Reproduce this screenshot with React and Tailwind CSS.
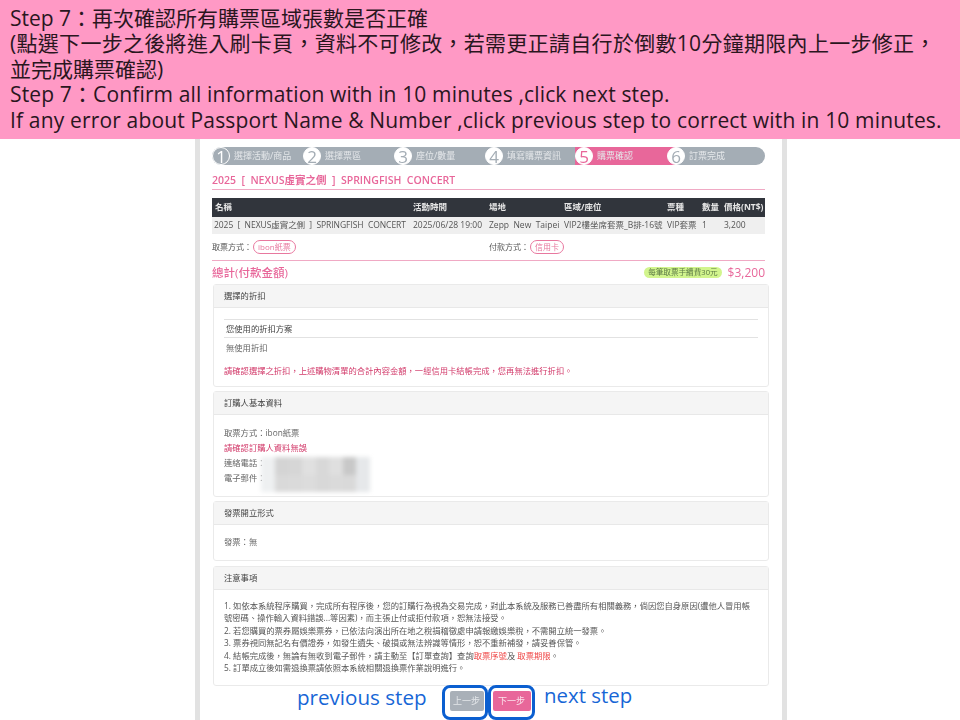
const cjk = "font-['Open_Sans','Noto_Sans_CJK_TC',sans-serif]";

const steps = [
  { no: "1", label: "選擇活動/商品", w: "w-[91px]" },
  { no: "2", label: "選擇票區", w: "w-[91px]" },
  { no: "3", label: "座位/數量", w: "w-[91px]" },
  { no: "4", label: "填寫購票資訊", w: "w-[90px]" },
  { no: "5", label: "購票確認", w: "w-[100px] -mr-[8px]", active: true },
  { no: "6", label: "訂票完成", w: "flex-1" },
];

const headCols = [
  { text: "名稱", w: "w-[198px]" },
  { text: "活動時間", w: "w-[76px]" },
  { text: "場地", w: "w-[75px]" },
  { text: "區域/座位", w: "w-[103px]" },
  { text: "票種", w: "w-[35px]" },
  { text: "數量", w: "w-[22px]" },
  { text: "價格(NT$)", w: "flex-1" },
];

const rowCols = [
  "2025  [  NEXUS虛實之側  ]  SPRINGFISH  CONCERT",
  "2025/06/28 19:00",
  "Zepp  New  Taipei",
  "VIP2樓坐席套票_B排-16號",
  "VIP套票",
  "1",
  "3,200",
];

const blurCells = [
  "bg-[#eef0f1]", "bg-[#d4d4d4]", "bg-[#d6d6d6]", "bg-[#e0e0e0]", "bg-[#d8d8d8]", "bg-[#dfdfdf]", "bg-[#c8c8c8]", "bg-[#e6e8ea]",
  "bg-[#eef0f1]", "bg-[#d9d9d9]", "bg-[#dadada]", "bg-[#dcdcdc]", "bg-[#d8d8d8]", "bg-[#dadada]", "bg-[#d9d9d9]", "bg-[#e6e8ea]",
];

function Panel({ title, className, children }) {
  return (
    <div className={`ml-px w-[556px] rounded-[3px] border border-[#eaeaea] bg-white ${className}`}>
      <div className="flex h-[23px] items-center border-b border-[#e8e8e8] bg-[#f5f5f5] px-[10px] text-[8.3px] text-[#444]">
        {title}
      </div>
      {children}
    </div>
  );
}

function Pill({ children }) {
  return (
    <span className="ml-[1px] flex h-[14px] items-center rounded-full border border-[#e8789f] px-[4px] text-[8px] text-[#e8789f]">
      {children}
    </span>
  );
}

export default function App() {
  return (
    <div className={`relative h-[720px] w-[960px] overflow-hidden bg-white ${cjk}`}>

      {/* Instruction banner */}
      <div className="h-[139px] bg-[#ff99c5] pl-[10px] pt-[6px] text-[21px] leading-[25.4px] text-[#2a161e]">
        <div>Step 7：再次確認所有購票區域張數是否正確</div>
        <div className="whitespace-nowrap tracking-[0.3px]">(點選下一步之後將進入刷卡頁，資料不可修改，若需更正請自行於倒數10分鐘期限內上一步修正，</div>
        <div>並完成購票確認)</div>
        <div className="tracking-[0.14px]">Step 7：Confirm all information with in 10 minutes ,click next step.</div>
        <div className="whitespace-nowrap tracking-[0.16px]">If any error about Passport Name &amp; Number ,click previous step to correct with in 10 minutes.</div>
      </div>

      {/* Page column */}
      <div className="ml-[195px] h-[581px] w-[592px] border-x-[5px] border-[#e2e2e2] px-[12px] pt-[8px] blur-[0.4px]">

        {/* Stepper */}
        <div className="flex h-[18px] w-[553px] rounded-full bg-[#a4adb5]">
          {steps.map((s) => (
            <div
              key={s.no}
              className={`flex h-full items-center ${s.w} ${s.active ? "bg-[#e8679a]" : ""}`}
            >
              <span className={`flex h-[18px] w-[18px] shrink-0 items-center justify-center rounded-full border border-white text-[17px] leading-none ${s.no === "1" ? "bg-[#a4adb5] text-white" : "bg-white"} ${s.active ? "text-[#e8679a]" : s.no === "1" ? "" : "text-[#a4adb5]"}`}>
                {s.no}
              </span>
              <span className="ml-[4px] whitespace-nowrap text-[9px] text-[#e4e7ea]">{s.label}</span>
            </div>
          ))}
        </div>

        {/* Event title */}
        <div className="mt-[8px] flex h-[16px] w-[553px] items-center text-[10.5px] font-semibold whitespace-pre text-[#e8679a]">
          2025  [  NEXUS虛實之側  ]  SPRINGFISH  CONCERT
        </div>
        <div className="mb-[8px] w-[553px] border-b border-[#f0a9c4]" />

        {/* Order table */}
        <div className="w-[553px]">
          <div className="flex h-[19px] items-center bg-[#31353c] pl-[3px] text-[8.5px] font-bold text-[#e6e6e6]">
            {headCols.map((c) => (
              <span key={c.text} className={`${c.w} whitespace-nowrap`}>{c.text}</span>
            ))}
          </div>
          <div className="flex h-[17px] items-center bg-[#efefef] pl-[2px] text-[8.5px] text-[#555]">
            {rowCols.map((text, i) => (
              <span key={text} className={`${i === 0 ? "w-[199px] tracking-[-0.05px]" : headCols[i].w} whitespace-pre`}>{text}</span>
            ))}
          </div>
        </div>

        {/* Pickup and payment */}
        <div className="flex h-[27px] w-[553px] items-center border-b border-[#f0a9c4] text-[8px] text-[#555]">
          <div className="flex w-[277px] items-center">
            取票方式：<Pill>ibon紙票</Pill>
          </div>
          <div className="flex items-center">
            付款方式：<Pill>信用卡</Pill>
          </div>
        </div>

        {/* Total */}
        <div className="flex h-[23px] w-[553px] items-center justify-between">
          <span className="text-[11.5px] font-medium text-[#e8679a]">總計(付款金額)</span>
          <div className="flex items-center gap-[6px]">
            <span className="flex h-[11px] items-center rounded-full bg-[#d2f58e] px-[4px] text-[7.6px] text-[#5c7a45]">每筆取票手續費30元</span>
            <span className="text-[12px] text-[#e8679a]">$3,200</span>
          </div>
        </div>

        <Panel title="選擇的折扣" className="h-[103px]">
          <div className="mx-[10px] mt-[11px] border-y border-[#e2e2e2] px-[2px] py-[2.5px] text-[8.3px] leading-[12px] text-[#444]">您使用的折扣方案</div>
          <div className="mx-[12px] mt-[3px] text-[8.3px] leading-[13px] text-[#666]">無使用折扣</div>
          <div className="mx-[10px] mt-[10px] text-[8.3px] leading-[13px] text-[#d23a6a]">請確認選擇之折扣，上述購物清單的合計內容金額，一經信用卡結帳完成，您再無法進行折扣。</div>
        </Panel>

        <Panel title="訂購人基本資料" className="relative mt-[4px] h-[106px]">
          <div className="mx-[10px] mt-[10px] text-[8.3px] leading-[15px] text-[#666]">
            <div>取票方式：ibon紙票</div>
            <div className="text-[#d23a6a]">請確認訂購人資料無誤</div>
            <div>連絡電話：</div>
            <div>電子郵件：</div>
          </div>
          {/* Masked personal data */}
          <div className="absolute left-[47px] top-[65px] grid h-[35px] w-[109px] grid-cols-8 blur-[2px]">
            {blurCells.map((c, i) => (
              <div key={i} className={c} />
            ))}
          </div>
        </Panel>

        <Panel title="發票開立形式" className="mt-[4px] h-[60px]">
          <div className="mx-[10px] mt-[10px] text-[8.3px] leading-[13px] text-[#666]">發票：無</div>
        </Panel>

        <Panel title="注意事項" className="mt-[5px] h-[120px]">
          <div className="mx-[10px] mt-[10px] text-[8.3px] leading-[12.4px] whitespace-nowrap text-[#555]">
            <div>1. 如依本系統程序購買，完成所有程序後，您的訂購行為視為交易完成，對此本系統及服務已善盡所有相關義務，倘因您自身原因(遭他人冒用帳</div>
            <div>號密碼、操作輸入資料錯誤...等因素)，而主張止付或拒付款項，恕無法接受。</div>
            <div>2. 若您購買的票券屬娛樂票券，已依法向演出所在地之稅捐稽徵處申請報繳娛樂稅，不需開立統一發票。</div>
            <div>3. 票券視同無記名有價證券，如發生遺失、破損或無法辨識等情形，恕不重新補發，請妥善保管。</div>
            <div>4. 結帳完成後，無論有無收到電子郵件，請主動至【訂單查詢】查詢<span className="text-[#ef4444]">取票序號</span>及 <span className="text-[#ef4444]">取票期限</span>。</div>
            <div>5. 訂單成立後如需退換票請依照本系統相關退換票作業說明進行。</div>
          </div>
        </Panel>

        {/* Step buttons */}
        <div className="mt-[5px] flex justify-center gap-[9px] pr-[2px]">
          <button className="h-[20px] w-[34px] rounded-[2px] bg-[#a9b0b8] text-[9px] text-[#e4e7ea]">上一步</button>
          <button className="h-[20px] w-[38px] rounded-[2px] bg-[#e8679a] text-[9px] text-[#fbe3ec]">下一步</button>
        </div>
      </div>

      {/* Annotations over the screenshot */}
      <span className="absolute left-[297px] top-[686px] text-[20.6px] leading-[22px] text-[#1766d6]">previous step</span>
      <span className="absolute left-[544px] top-[684px] text-[20.4px] leading-[22px] text-[#1766d6]">next step</span>
      <div className="absolute left-[442px] top-[685px] h-[35px] w-[46px] rounded-[8px] border-[3px] border-[#0b5fd0]" />
      <div className="absolute left-[488px] top-[685px] h-[35px] w-[47px] rounded-[8px] border-[3px] border-[#0b5fd0]" />
    </div>
  );
}
